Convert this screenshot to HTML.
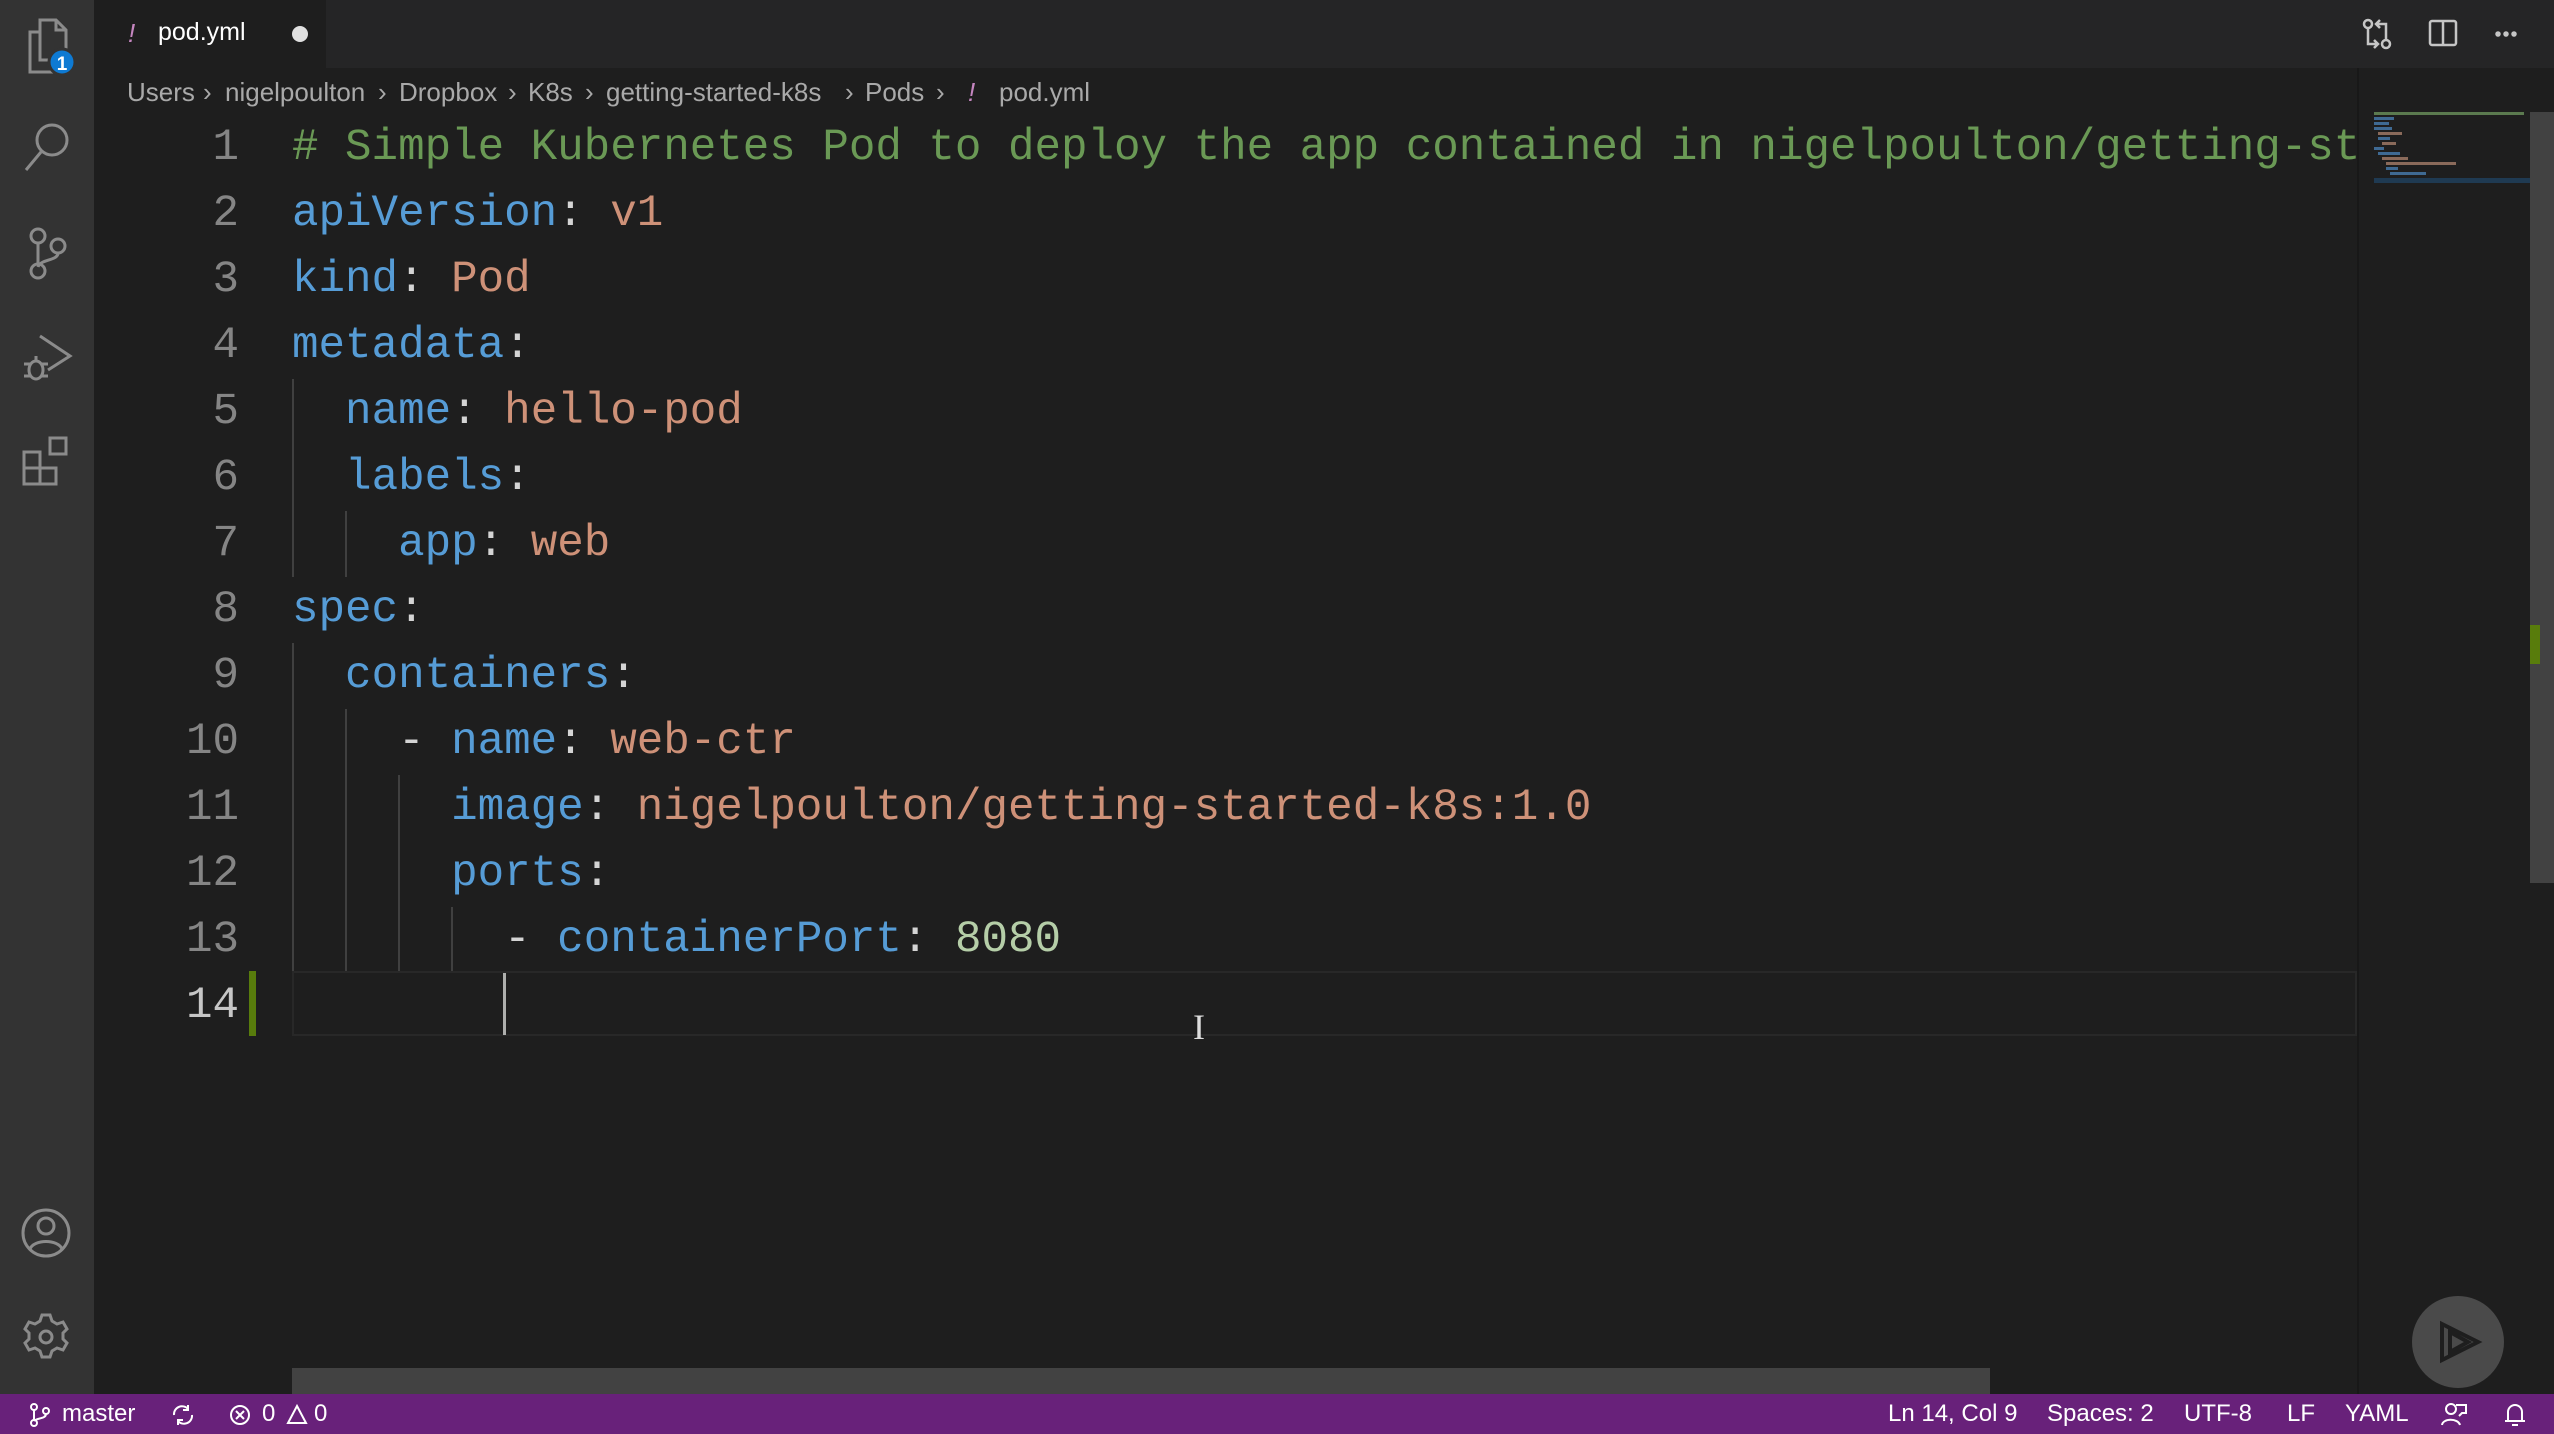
<!DOCTYPE html>
<html><head><meta charset="utf-8"><style>
*{margin:0;padding:0;box-sizing:border-box}
body{width:2554px;height:1434px;background:#1e1e1e;position:relative;overflow:hidden;font-family:"Liberation Sans",sans-serif}
.abs{position:absolute}
#act{left:0;top:0;width:94px;height:1394px;background:#333333}
#tabs{left:94px;top:0;width:2460px;height:68px;background:#252526}
#tab{left:94px;top:0;width:232px;height:68px;background:#1e1e1e}
.bc{position:absolute;top:75px;font-size:26px;color:#a9a9a9;white-space:nowrap;line-height:34px}
.ln{position:absolute;left:150px;width:89px;text-align:right;font-family:"Liberation Mono",monospace;font-size:44.2px;color:#858585;line-height:66px;height:66px;margin-top:3px}
.cl{position:absolute;left:292px;font-family:"Liberation Mono",monospace;font-size:44.2px;color:#d4d4d4;line-height:66px;height:66px;white-space:pre;margin-top:3px}
.k{color:#569cd6}.s{color:#ce9178}.c{color:#6a9955}.n{color:#b5cea8}
.g{position:absolute;width:2px;background:#404040}
#status{left:0;top:1394px;width:2554px;height:40px;background:#68217a;color:#fff;font-size:24px}
#status span{position:absolute;top:6px;white-space:nowrap}
.mm{position:absolute;height:3px}
</style></head><body>
<div id="act" class="abs"></div>
<svg class="abs" style="left:0;top:0" width="94" height="1394" fill="none" stroke="#8b8b8b" stroke-width="3">
  <path d="M40 20h16l10 10v30H40z M56 20v10h10"/>
  <path d="M40 32H30v40h26v-12"/>
  <circle cx="62" cy="62" r="13" fill="#0e7ad3" stroke="#333" stroke-width="3"/>
  <text x="62" y="70" font-family="Liberation Sans" font-size="19" font-weight="bold" fill="#fff" stroke="none" text-anchor="middle">1</text>
  <circle cx="52" cy="140" r="15"/><path d="M41 152L26 170"/>
  <circle cx="38" cy="236" r="7"/><circle cx="38" cy="271" r="7"/><circle cx="58" cy="246" r="7"/><path d="M38 243v21 M58 253c0 8-18 6-20 14"/>
  <path d="M40 336l30 20-22 14"/><ellipse cx="36" cy="370" rx="7" ry="9"/><path d="M24 364h6 M24 376h6 M42 364h6 M42 376h6 M36 360v-4"/>
  <path d="M24 452h16v16H24z M24 468h16v16H24z M40 468h16v16H40z M50 438h16v16H50z"/>
  <circle cx="46" cy="1233" r="23"/><circle cx="46" cy="1226" r="8"/><path d="M30 1249c4-10 28-10 32 0"/>
  <circle cx="46" cy="1337" r="6"/>
  <path d="M42 1315h8l2 6 5 3 6-2 4 7-4 4v6l4 4-4 7-6-2-5 3-2 6h-8l-2-6-5-3-6 2-4-7 4-4v-6l-4-4 4-7 6 2 5-3z"/>
</svg>
<div id="tabs" class="abs"></div>
<div id="tab" class="abs"></div>
<div class="abs" style="left:128px;top:18px;font-size:26px;color:#c586c0;font-style:italic">!</div>
<div class="abs" style="left:158px;top:18px;font-size:25px;color:#fff">pod.yml</div>
<div class="abs" style="left:292px;top:26px;width:16px;height:16px;border-radius:50%;background:#e0e0e0"></div>
<svg class="abs" style="left:2350px;top:14px" width="204" height="40" fill="none" stroke="#c5c5c5" stroke-width="2.5">
  <circle cx="18" cy="10" r="4"/><circle cx="36" cy="30" r="4"/><path d="M18 14v16h10 M36 26V10h-10 M30 6l-4 4 4 4 M24 26l4 4-4 4"/>
  <rect x="80" y="7" width="26" height="24" rx="2"/><path d="M93 7v24"/>
  <circle cx="148" cy="20" r="1.5" fill="#c5c5c5"/><circle cx="156" cy="20" r="1.5" fill="#c5c5c5"/><circle cx="164" cy="20" r="1.5" fill="#c5c5c5"/>
</svg>
<div class="bc" style="left:127px">Users</div><div class="bc" style="left:203px">›</div>
<div class="bc" style="left:225px">nigelpoulton</div><div class="bc" style="left:378px">›</div>
<div class="bc" style="left:399px">Dropbox</div><div class="bc" style="left:508px">›</div>
<div class="bc" style="left:528px">K8s</div><div class="bc" style="left:585px">›</div>
<div class="bc" style="left:606px">getting-started-k8s</div><div class="bc" style="left:845px">›</div>
<div class="bc" style="left:865px">Pods</div><div class="bc" style="left:936px">›</div>
<div class="bc" style="left:968px;color:#c586c0;font-style:italic">!</div>
<div class="bc" style="left:999px">pod.yml</div>
<div class="abs" style="left:292px;top:971px;width:2065px;height:65px;border:2px solid #282828"></div>
<div class="abs" style="left:249px;top:971px;width:7px;height:65px;background:#587c0c"></div>
<div class="g" style="left:292px;top:379px;height:198px"></div>
<div class="g" style="left:345px;top:511px;height:66px"></div>
<div class="g" style="left:292px;top:643px;height:328px"></div>
<div class="g" style="left:345px;top:709px;height:262px"></div>
<div class="g" style="left:398px;top:775px;height:196px"></div>
<div class="g" style="left:451px;top:907px;height:64px"></div>
<div class="ln" style="top:112px">1</div><div class="ln" style="top:178px">2</div><div class="ln" style="top:244px">3</div><div class="ln" style="top:310px">4</div><div class="ln" style="top:376px">5</div><div class="ln" style="top:442px">6</div><div class="ln" style="top:508px">7</div><div class="ln" style="top:574px">8</div><div class="ln" style="top:640px">9</div><div class="ln" style="top:706px">10</div><div class="ln" style="top:772px">11</div><div class="ln" style="top:838px">12</div><div class="ln" style="top:904px">13</div><div class="ln" style="top:970px;color:#c6c6c6">14</div>
<div class="cl" style="top:112px;width:2065px;overflow:hidden"><span class="c"># Simple Kubernetes Pod to deploy the app contained in nigelpoulton/getting-started-k8s</span></div>
<div class="cl" style="top:178px"><span class="k">apiVersion</span>: <span class="s">v1</span></div>
<div class="cl" style="top:244px"><span class="k">kind</span>: <span class="s">Pod</span></div>
<div class="cl" style="top:310px"><span class="k">metadata</span>:</div>
<div class="cl" style="top:376px">  <span class="k">name</span>: <span class="s">hello-pod</span></div>
<div class="cl" style="top:442px">  <span class="k">labels</span>:</div>
<div class="cl" style="top:508px">    <span class="k">app</span>: <span class="s">web</span></div>
<div class="cl" style="top:574px"><span class="k">spec</span>:</div>
<div class="cl" style="top:640px">  <span class="k">containers</span>:</div>
<div class="cl" style="top:706px">    - <span class="k">name</span>: <span class="s">web-ctr</span></div>
<div class="cl" style="top:772px">      <span class="k">image</span>: <span class="s">nigelpoulton/getting-started-k8s:1.0</span></div>
<div class="cl" style="top:838px">      <span class="k">ports</span>:</div>
<div class="cl" style="top:904px">        - <span class="k">containerPort</span>: <span class="n">8080</span></div>
<div class="abs" style="left:503px;top:973px;width:3px;height:62px;background:#aeafad"></div>
<div class="abs" style="left:1193px;top:1006px;font-family:'Liberation Serif',serif;font-size:36px;color:#ddd">I</div>
<div class="abs" style="left:2357px;top:68px;width:2px;height:1326px;background:#181818"></div>
<div class="mm" style="left:2374px;top:112px;width:150px;background:#5b7a4f"></div>
<div class="mm" style="left:2374px;top:117px;width:20px;background:#3f6a93"></div>
<div class="mm" style="left:2374px;top:122px;width:15px;background:#3f6a93"></div>
<div class="mm" style="left:2374px;top:127px;width:18px;background:#3f6a93"></div>
<div class="mm" style="left:2378px;top:132px;width:24px;background:#8a6a5a"></div>
<div class="mm" style="left:2378px;top:137px;width:12px;background:#3f6a93"></div>
<div class="mm" style="left:2382px;top:142px;width:14px;background:#8a6a5a"></div>
<div class="mm" style="left:2374px;top:147px;width:10px;background:#3f6a93"></div>
<div class="mm" style="left:2378px;top:152px;width:22px;background:#3f6a93"></div>
<div class="mm" style="left:2382px;top:157px;width:26px;background:#8a6a5a"></div>
<div class="mm" style="left:2386px;top:162px;width:70px;background:#8a6a5a"></div>
<div class="mm" style="left:2386px;top:167px;width:12px;background:#3f6a93"></div>
<div class="mm" style="left:2390px;top:172px;width:36px;background:#3f6a93"></div>
<div class="mm" style="left:2374px;top:178px;width:156px;height:5px;background:#1f3a52"></div>
<div class="abs" style="left:2530px;top:112px;width:24px;height:771px;background:#424242"></div>
<div class="abs" style="left:2530px;top:625px;width:10px;height:39px;background:#587c0c"></div>
<div class="abs" style="left:292px;top:1368px;width:1698px;height:26px;background:#424242"></div>
<div class="abs" style="left:2412px;top:1296px;width:92px;height:92px;border-radius:50%;background:#4a4a4a"></div>
<svg class="abs" style="left:2412px;top:1296px" width="92" height="92" fill="none" stroke="#1e1e1e" stroke-width="4"><path d="M30 28l36 18-36 18z M38 36l18 10-18 10z"/></svg>
<div id="status" class="abs">
<svg class="abs" style="left:26px;top:8px" width="30" height="26" fill="none" stroke="#fff" stroke-width="2"><circle cx="8" cy="5" r="3"/><circle cx="8" cy="21" r="3"/><circle cx="20" cy="9" r="3"/><path d="M8 8v10 M20 12c0 5-10 4-12 7"/></svg>
<span style="left:62px">master</span>
<svg class="abs" style="left:168px;top:8px" width="30" height="26" fill="none" stroke="#fff" stroke-width="2"><path d="M6 13a8 8 0 0 1 14-6 M24 13a8 8 0 0 1-14 6 M20 3v5h-5 M10 23v-5h5"/></svg>
<svg class="abs" style="left:228px;top:8px" width="100" height="26" fill="none" stroke="#fff" stroke-width="2"><circle cx="12" cy="13" r="9"/><path d="M8 9l8 8 M16 9l-8 8 M69 4l9 17H60z"/></svg>
<span style="left:262px">0</span><span style="left:314px">0</span>
<span style="left:1888px">Ln 14, Col 9</span>
<span style="left:2047px">Spaces: 2</span>
<span style="left:2184px">UTF-8</span>
<span style="left:2287px">LF</span>
<span style="left:2345px">YAML</span>
<svg class="abs" style="left:2440px;top:7px" width="100" height="28" fill="none" stroke="#fff" stroke-width="2"><circle cx="11" cy="8" r="5"/><path d="M2 24c1-7 16-7 18 0 M16 4h10v8h-4l-3 3"/><path d="M68 20V11a7 7 0 0 1 14 0v9h3H65z M72 24h6"/></svg>
</div>
</body></html>
